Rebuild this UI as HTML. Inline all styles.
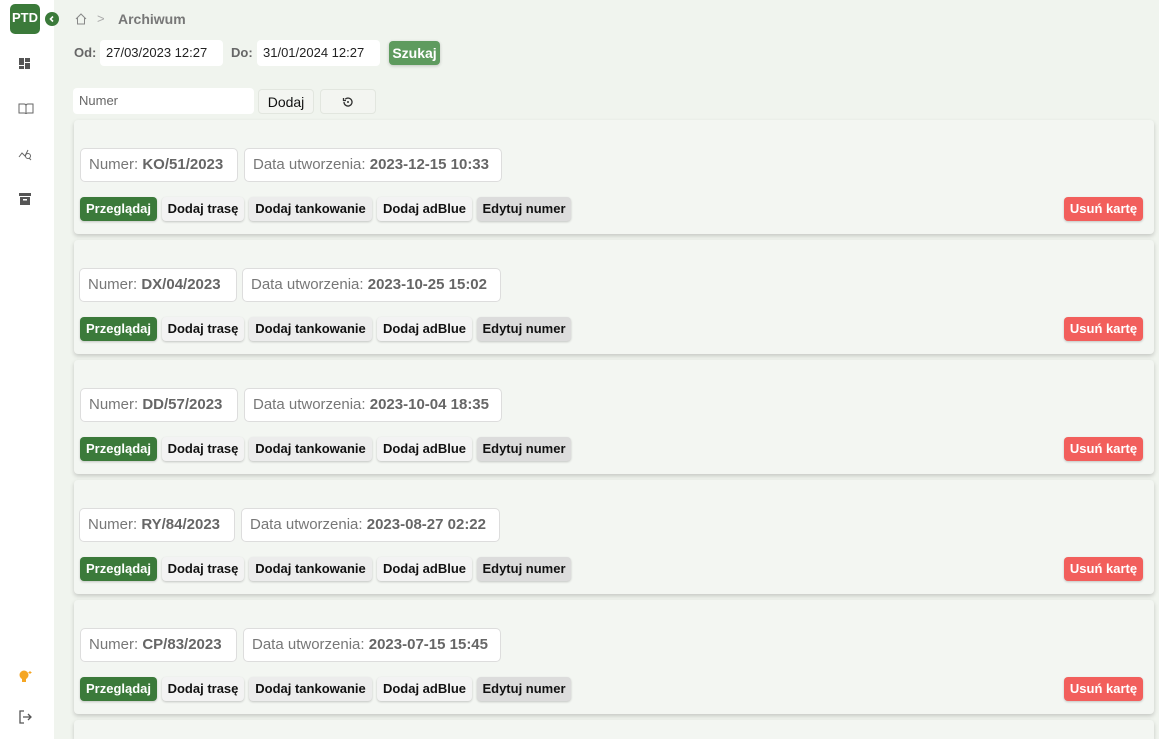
<!DOCTYPE html>
<html style="overflow:hidden;height:739px"><head><meta charset="utf-8"><style>
*{box-sizing:border-box;margin:0;padding:0}
body{width:1159px;height:739px;overflow:hidden;background:#f0f4ee;font-family:"Liberation Sans",Arial,sans-serif;position:relative}
.side{position:absolute;left:0;top:0;width:54px;height:739px;background:#fff}
.logo{position:absolute;left:10px;top:4px;width:30px;height:30px;background:#3b7a3a;border-radius:5px;color:#fff;font-weight:bold;font-size:13px;line-height:28px;text-align:center}
.col{position:absolute;left:45px;top:12px;width:14px;height:14px;border-radius:50%;background:#3b7a3a}
.ic{position:absolute;left:18px}
.abs{position:absolute}
.inp{position:absolute;background:#fff;border-radius:4px;font-size:13px;color:#222;padding-left:6px;line-height:26px;height:26px}
.lbl{position:absolute;font-size:13px;font-weight:bold;color:#666}
.btn{position:absolute;border-radius:4px;font-size:13px;font-weight:bold;text-align:center;box-shadow:0 1px 3px rgba(0,0,0,.2)}
.card{position:absolute;left:74px;width:1080px;height:114px;background:#f3f6f2;border-radius:4px;box-shadow:0 2px 4px rgba(0,0,0,.18)}
.box{position:absolute;top:28px;height:34px;background:#fff;border:1px solid #ddd;border-radius:5px;font-size:15px;color:#777;line-height:32px;padding-left:8px}
.box b{color:#666}
.cb{position:absolute;top:77px;height:24px;line-height:24px;border-radius:4px;font-size:13px;font-weight:bold;text-align:center;color:#111;background:#f3f3f3;box-shadow:0 1px 2px rgba(0,0,0,.2)}
</style></head><body>
<div class="side">
<div class="logo">PTD</div>
<div class="col"><svg width="14" height="14"><path d="M8 4.5 5.5 7 8 9.5" stroke="#fff" stroke-width="1.6" fill="none"/></svg></div>
<svg class="ic" style="top:57px" width="14" height="14"><rect x="1" y="1" width="5" height="7" fill="#555"/><rect x="7" y="1" width="5" height="4" fill="#555"/><rect x="1" y="9" width="5" height="3" fill="#555"/><rect x="7" y="6" width="5" height="6" fill="#555"/></svg>
<svg class="ic" style="top:102px" width="16" height="14"><path d="M1 2h5q2 0 2 2v8q0-1-2-1H1zM15 2h-5q-2 0-2 2v8q0-1 2-1h5z" stroke="#666" fill="none"/></svg>
<svg class="ic" style="top:147px" width="16" height="14"><path d="M1 10l3-4 3 3 3-6M13 13l-2-2" stroke="#666" fill="none"/><circle cx="10" cy="9" r="2.5" stroke="#666" fill="none"/></svg>
<svg class="ic" style="top:192px" width="14" height="14"><rect x="1" y="1" width="12" height="3" fill="#555"/><rect x="2" y="5" width="10" height="8" fill="#555"/><rect x="5" y="7" width="4" height="1.5" fill="#fff"/></svg>
<svg class="ic" style="top:669px" width="16" height="16"><circle cx="6" cy="6" r="4.5" fill="#f5a623"/><rect x="4" y="10" width="4" height="3" fill="#f5a623"/><path d="M12 2v3M10.5 3.5h3" stroke="#f5a623"/></svg>
<svg class="ic" style="top:710px" width="14" height="14"><path d="M6 1H2v12h4M5 7h8M10 4l3 3-3 3" stroke="#555" fill="none" stroke-width="1.3"/></svg>
</div>
<svg class="abs" style="left:74px;top:12px" width="14" height="14"><path d="M2 7l5-5 5 5M3.5 6v6h7V6" stroke="#888" fill="none"/></svg>
<div class="abs" style="left:97px;top:11px;color:#aaa;font-size:13px">&gt;</div>
<div class="abs" style="left:118px;top:11px;color:#777;font-weight:bold;font-size:14px">Archiwum</div>
<div class="lbl" style="left:74px;top:45px">Od:</div>
<div class="inp" style="left:100px;top:40px;width:123px">27/03/2023 12:27</div>
<div class="lbl" style="left:231px;top:45px">Do:</div>
<div class="inp" style="left:257px;top:40px;width:123px">31/01/2024 12:27</div>
<div class="btn" style="left:389px;top:41px;width:51px;height:24px;line-height:24px;background:#5e9b5e;color:#fff;font-size:14px">Szukaj</div>
<div class="inp" style="left:73px;top:88px;width:181px;color:#666">Numer</div>
<div class="btn" style="left:258px;top:89px;width:56px;height:25px;line-height:25px;background:#f3f5f1;color:#111;font-weight:normal;font-size:14px;box-shadow:none;border:1px solid #e2e6df">Dodaj</div>
<div class="btn" style="left:320px;top:89px;width:56px;height:25px;background:#f3f5f1;box-shadow:none;border:1px solid #e2e6df"><svg width="12" height="12" style="margin-top:6px"><path d="M2 6a4 4 0 1 0 1.2-2.8M1.5 2v2.5H4" stroke="#333" fill="none" stroke-width="1.3"/><circle cx="6" cy="6" r="1" fill="#333"/></svg></div>

<div class="card" style="top:120px"><div class="box" style="left:6px;width:158px">Numer: <b>KO/51/2023</b></div><div class="box" style="left:170px;width:258px">Data utworzenia: <b>2023-12-15 10:33</b></div>
<div class="cb" style="left:6px;width:77px;background:#3b7a3a;color:#fff">Przeglądaj</div><div class="cb" style="left:88px;width:82px">Dodaj trasę</div><div class="cb" style="left:175px;width:123px;background:#ececec">Dodaj tankowanie</div><div class="cb" style="left:303px;width:95px">Dodaj adBlue</div><div class="cb" style="left:403px;width:94px;background:#dcdcdc">Edytuj numer</div><div class="cb" style="left:990px;width:79px;background:#f25f5c;color:#fff">Usuń kartę</div></div>
<div class="card" style="top:240px"><div class="box" style="left:5px;width:158px">Numer: <b>DX/04/2023</b></div><div class="box" style="left:168px;width:259px">Data utworzenia: <b>2023-10-25 15:02</b></div>
<div class="cb" style="left:6px;width:77px;background:#3b7a3a;color:#fff">Przeglądaj</div><div class="cb" style="left:88px;width:82px">Dodaj trasę</div><div class="cb" style="left:175px;width:123px;background:#ececec">Dodaj tankowanie</div><div class="cb" style="left:303px;width:95px">Dodaj adBlue</div><div class="cb" style="left:403px;width:94px;background:#dcdcdc">Edytuj numer</div><div class="cb" style="left:990px;width:79px;background:#f25f5c;color:#fff">Usuń kartę</div></div>
<div class="card" style="top:360px"><div class="box" style="left:6px;width:158px">Numer: <b>DD/57/2023</b></div><div class="box" style="left:170px;width:258px">Data utworzenia: <b>2023-10-04 18:35</b></div>
<div class="cb" style="left:6px;width:77px;background:#3b7a3a;color:#fff">Przeglądaj</div><div class="cb" style="left:88px;width:82px">Dodaj trasę</div><div class="cb" style="left:175px;width:123px;background:#ececec">Dodaj tankowanie</div><div class="cb" style="left:303px;width:95px">Dodaj adBlue</div><div class="cb" style="left:403px;width:94px;background:#dcdcdc">Edytuj numer</div><div class="cb" style="left:990px;width:79px;background:#f25f5c;color:#fff">Usuń kartę</div></div>
<div class="card" style="top:480px"><div class="box" style="left:5px;width:156px">Numer: <b>RY/84/2023</b></div><div class="box" style="left:167px;width:259px">Data utworzenia: <b>2023-08-27 02:22</b></div>
<div class="cb" style="left:6px;width:77px;background:#3b7a3a;color:#fff">Przeglądaj</div><div class="cb" style="left:88px;width:82px">Dodaj trasę</div><div class="cb" style="left:175px;width:123px;background:#ececec">Dodaj tankowanie</div><div class="cb" style="left:303px;width:95px">Dodaj adBlue</div><div class="cb" style="left:403px;width:94px;background:#dcdcdc">Edytuj numer</div><div class="cb" style="left:990px;width:79px;background:#f25f5c;color:#fff">Usuń kartę</div></div>
<div class="card" style="top:600px"><div class="box" style="left:6px;width:157px">Numer: <b>CP/83/2023</b></div><div class="box" style="left:169px;width:258px">Data utworzenia: <b>2023-07-15 15:45</b></div>
<div class="cb" style="left:6px;width:77px;background:#3b7a3a;color:#fff">Przeglądaj</div><div class="cb" style="left:88px;width:82px">Dodaj trasę</div><div class="cb" style="left:175px;width:123px;background:#ececec">Dodaj tankowanie</div><div class="cb" style="left:303px;width:95px">Dodaj adBlue</div><div class="cb" style="left:403px;width:94px;background:#dcdcdc">Edytuj numer</div><div class="cb" style="left:990px;width:79px;background:#f25f5c;color:#fff">Usuń kartę</div></div>
<div class="card" style="top:720px;height:19px;border-radius:4px 4px 0 0"></div>
</body></html>
